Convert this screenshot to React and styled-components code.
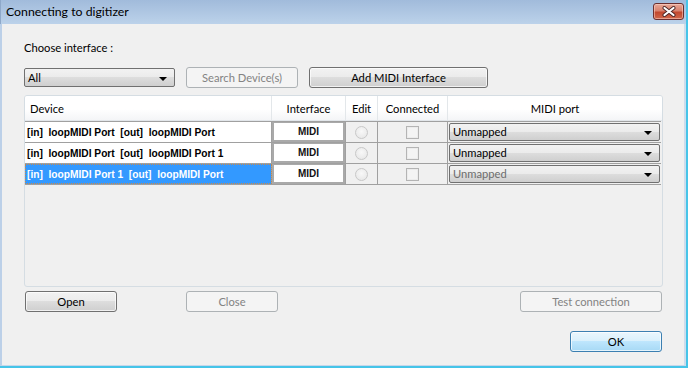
import React from "react";
import styled, { createGlobalStyle, css } from "styled-components";

const GlobalStyle = createGlobalStyle`
  html, body {
    margin: 0;
    padding: 0;
    background: #f0f0f0;
  }
  body {
    font-family: Lato, "Noto Sans", sans-serif;
    font-size: 11.2px;
    color: #000;
  }
`;

const devices = [
  { inPort: "loopMIDI Port", outPort: "loopMIDI Port", selected: false },
  { inPort: "loopMIDI Port", outPort: "loopMIDI Port 1", selected: false },
  { inPort: "loopMIDI Port 1", outPort: "loopMIDI Port", selected: true },
];

const App = () => {
  return (
    <>
      <GlobalStyle />
      <Window>
        <TitleBar>
          <Title>Connecting to digitizer</Title>
          <CloseBox>
            <svg width="14" height="11" viewBox="0 0 14 11">
              <path
                d="M2.5 2 L11.5 9 M11.5 2 L2.5 9"
                stroke="#4a2626"
                strokeWidth="4"
                strokeLinecap="round"
              />
              <path
                d="M2.5 2 L11.5 9 M11.5 2 L2.5 9"
                stroke="#ffffff"
                strokeWidth="2.2"
                strokeLinecap="round"
              />
            </svg>
          </CloseBox>
        </TitleBar>
        <Frame>
          <Label>Choose interface :</Label>
          <Toolbar>
            <Combo $width={151}>
              <ComboText>All</ComboText>
              <Arrow />
            </Combo>
            <Button $width={112} $disabled>
              Search Device(s)
            </Button>
            <Button $width={179}>Add MIDI Interface</Button>
          </Toolbar>

          <TableBox>
            <HeaderRow>
              <HeadCell $align="left">Device</HeadCell>
              <HeadCell>Interface</HeadCell>
              <HeadCell>Edit</HeadCell>
              <HeadCell>Connected</HeadCell>
              <HeadCell $last>MIDI port</HeadCell>
            </HeaderRow>
            <Rows>
              {devices.map((d, i) => (
                <Row key={i}>
                  <DeviceCell $selected={d.selected}>
                    {`[in]  ${d.inPort}  [out]  ${d.outPort}`}
                  </DeviceCell>
                  <InterfaceCell>
                    <InterfaceBox>MIDI</InterfaceBox>
                  </InterfaceCell>
                  <GrayCell>
                    <Radio />
                  </GrayCell>
                  <GrayCell>
                    <Check />
                  </GrayCell>
                  <PortCell>
                    <Combo $full $dim={d.selected}>
                      <ComboText>Unmapped</ComboText>
                      <Arrow />
                    </Combo>
                  </PortCell>
                </Row>
              ))}
            </Rows>
          </TableBox>

          <ButtonRow>
            <Button $width={92} style={{ marginLeft: 1 }}>
              Open
            </Button>
            <Button $width={92} $disabled style={{ marginLeft: 69 }}>
              Close
            </Button>
            <Spacer />
            <Button $width={142} $disabled style={{ marginRight: 2 }}>
              Test connection
            </Button>
          </ButtonRow>
          <OkRow>
            <Button $width={92} $default style={{ marginRight: 1 }}>
              OK
            </Button>
          </OkRow>
        </Frame>
      </Window>
    </>
  );
};

export default App;

const Window = styled.div`
  width: 688px;
  height: 368px;
  box-sizing: border-box;
  display: flex;
  flex-direction: column;
  border-right: 2px solid #46c4e8;
  border-bottom: 2px solid #46c4e8;
  overflow: hidden;
`;

const TitleBar = styled.div`
  height: 24px;
  flex-shrink: 0;
  display: flex;
  align-items: flex-start;
  justify-content: space-between;
  padding-left: 5px;
  background: linear-gradient(#a1bbdb, #bcd2ea);
  border-left: 1px solid #8ea8c9;
`;

const Title = styled.div`
  font-size: 12.3px;
  line-height: 14px;
  margin-top: 5px;
  color: #000;
`;

const CloseBox = styled.div`
  width: 29px;
  height: 15px;
  margin-top: 3px;
  margin-right: 2px;
  border: 1px solid #6b3030;
  border-radius: 3px;
  display: flex;
  align-items: center;
  justify-content: center;
  background: linear-gradient(#e8a898 0%, #d8826e 45%, #c2482e 55%, #d0684c 100%);
  box-shadow: inset 0 0 0 1px rgba(255, 220, 210, 0.5);
`;

const Frame = styled.div`
  flex: 1;
  display: flex;
  flex-direction: column;
  background: #f0f0f0;
  border-left: 2px solid #bcd0e8;
  border-right: 2px solid #cddcec;
  border-bottom: 1px solid #c6d7ea;
  padding: 0 20px 0 22px;
`;

const Label = styled.div`
  margin-top: 17px;
  height: 14px;
  line-height: 14px;
`;

const Toolbar = styled.div`
  margin-top: 12px;
  height: 21px;
  display: flex;
  align-items: center;
  gap: 11px;
`;

const buttonFace = css`
  border: 1px solid #707070;
  border-radius: 3px;
  background: linear-gradient(
    #f2f2f2 0%,
    #ebebeb 49%,
    #dddddd 50%,
    #cfcfcf 100%
  );
  box-shadow: inset 0 0 0 1px rgba(255, 255, 255, 0.7);
`;

const Button = styled.div`
  box-sizing: border-box;
  width: ${(p) => p.$width}px;
  height: 21px;
  display: flex;
  align-items: center;
  justify-content: center;
  ${buttonFace}
  ${(p) =>
    p.$disabled &&
    css`
      border-color: #adb2b5;
      background: #f4f4f4;
      box-shadow: none;
      color: #838383;
    `}
  ${(p) =>
    p.$default &&
    css`
      border-color: #3c7fb1;
      background: linear-gradient(
        #eaf6fd 0%,
        #d9f0fc 49%,
        #bee6fd 50%,
        #a7d9f5 100%
      );
    `}
`;

const Combo = styled.div`
  box-sizing: border-box;
  width: ${(p) => (p.$full ? "100%" : `${p.$width}px`)};
  height: ${(p) => (p.$full ? "100%" : "19px")};
  display: flex;
  align-items: center;
  padding: 0 7px 0 3px;
  color: ${(p) => (p.$dim ? "#6d6d6d" : "#000")};
  border: 1px solid #707070;
  border-radius: 2px;
  background: linear-gradient(#f2f2f2 0%, #ebebeb 49%, #dddddd 50%, #cfcfcf 100%);
`;

const ComboText = styled.span`
  flex: 1;
  line-height: 14px;
`;

const Arrow = styled.span`
  width: 0;
  height: 0;
  margin-top: 2px;
  border-left: 4px solid transparent;
  border-right: 4px solid transparent;
  border-top: 4px solid #000;
`;

const TableBox = styled.div`
  margin-top: 7px;
  width: 639px;
  height: 192px;
  box-sizing: border-box;
  border: 1px solid #d5dde3;
  border-radius: 3px;
  overflow: hidden;
`;

const columns = "247px 74px 32px 70px 1fr";

const HeaderRow = styled.div`
  height: 24px;
  display: grid;
  grid-template-columns: ${columns};
  background: linear-gradient(#ffffff 0%, #ffffff 55%, #f4f5f7 100%);
  border-bottom: 1px solid #e2e6ea;
`;

const HeadCell = styled.div`
  display: flex;
  align-items: center;
  justify-content: ${(p) => (p.$align === "left" ? "flex-start" : "center")};
  padding-left: ${(p) => (p.$align === "left" ? "5px" : "0")};
  border-right: ${(p) => (p.$last ? "none" : "1px solid #e3e7ea")};
  color: #000;
`;

const Rows = styled.div`
  border-top: 1px solid #a0a0a0;
  margin-right: 1px;
`;

const Row = styled.div`
  height: 20px;
  display: grid;
  grid-template-columns: ${columns};
  border-bottom: 1px solid #a0a0a0;
`;

const DeviceCell = styled.div`
  box-sizing: border-box;
  display: flex;
  align-items: center;
  padding-left: 2px;
  white-space: pre;
  font-family: "Liberation Sans", Arial, sans-serif;
  font-weight: bold;
  font-size: 10.2px;
  border-right: 1px solid #a0a0a0;
  background: ${(p) => (p.$selected ? "#3399ff" : "#ffffff")};
  color: ${(p) => (p.$selected ? "#ffffff" : "#000")};
  ${(p) =>
    p.$selected &&
    css`
      outline: 1px dotted #c88a4c;
      outline-offset: -1px;
    `}
`;

const InterfaceCell = styled.div`
  box-sizing: border-box;
  border-right: 1px solid #a0a0a0;
  background: #fff;
`;

const InterfaceBox = styled.div`
  box-sizing: border-box;
  height: 100%;
  display: flex;
  align-items: center;
  justify-content: center;
  border: 2px solid #a9a9a9;
  border-top-width: 1px;
  background: #fff;
  font-family: "Liberation Sans", Arial, sans-serif;
  font-weight: bold;
  font-size: 10px;
  color: #111;
`;

const GrayCell = styled.div`
  display: flex;
  align-items: center;
  justify-content: center;
  border-right: 1px solid #a0a0a0;
  background: #f0f0f0;
`;

const Radio = styled.span`
  width: 11px;
  height: 11px;
  border-radius: 50%;
  border: 1px solid #c8c8c8;
  background: radial-gradient(circle at 50% 40%, #f8f8f8, #e4e4e4);
`;

const Check = styled.span`
  width: 11px;
  height: 11px;
  border: 1px solid #b4b4b4;
  background: #f4f4f4;
  box-shadow: inset 0 0 0 1px #ececec;
`;

const PortCell = styled.div`
  padding: 1px;
  background: #f0f0f0;
`;

const ButtonRow = styled.div`
  margin-top: 4px;
  display: flex;
  align-items: center;
`;

const Spacer = styled.div`
  flex: 1;
`;

const OkRow = styled.div`
  margin-top: 19px;
  display: flex;
  justify-content: flex-end;
  width: 639px;
`;
